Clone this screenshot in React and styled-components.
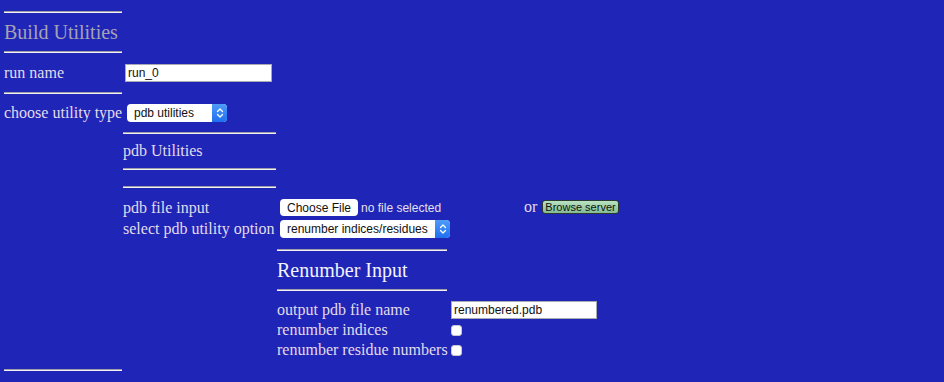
import React from "react";
import styled, { createGlobalStyle } from "styled-components";

const Global = createGlobalStyle`
  html, body { margin: 0; padding: 0; background: #1f25b6; }
  body { width: 944px; height: 382px; overflow: hidden; }
`;

const Page = styled.div`
  padding: 11px 0 0 4px;
  font-family: "Liberation Serif", "Times New Roman", serif;
  font-size: 16px;
  color: #e2dcec;
  display: flex;
  flex-direction: column;
`;

const Rule = styled.div`
  width: ${(p) => p.$w}px;
  height: 0;
  border-top: 1px solid #9c9cab;
  border-bottom: 1px solid #f2f2f2;
  margin-top: ${(p) => p.$mt || 0}px;
  margin-left: ${(p) => p.$ml || 0}px;
`;

const Heading = styled.div`
  height: ${(p) => p.$h}px;
  display: flex;
  align-items: center;
  font-size: ${(p) => p.$size || 20}px;
  color: ${(p) => p.$color};
  white-space: nowrap;
`;

const Row = styled.div`
  display: flex;
  align-items: center;
  height: ${(p) => p.$h}px;
  margin-top: ${(p) => p.$mt || 0}px;
`;

const Label = styled.div`
  width: ${(p) => p.$w}px;
  flex: none;
  white-space: nowrap;
`;

const Section = styled.div`
  display: flex;
  flex-direction: column;
  margin-left: ${(p) => p.$ml}px;
`;

const TextInput = styled.div`
  box-sizing: border-box;
  width: ${(p) => p.$w}px;
  height: 18px;
  background: #fff;
  border: 1px solid #a9a9b4;
  font-family: "Liberation Sans", Arial, sans-serif;
  font-size: 12px;
  color: #111;
  display: flex;
  align-items: center;
  padding-left: 2px;
  margin-left: ${(p) => p.$ml || 0}px;
`;

const Select = styled.div`
  box-sizing: border-box;
  width: ${(p) => p.$w}px;
  height: 18px;
  background: #fff;
  border-radius: 4px;
  display: flex;
  align-items: center;
  overflow: hidden;
  margin-left: ${(p) => p.$ml || 0}px;
  font-family: "Liberation Sans", Arial, sans-serif;
  font-size: 12px;
  color: #111;
`;

const SelectText = styled.span`
  flex: 1;
  padding-left: 7px;
  white-space: nowrap;
`;

const Arrow = styled.span`
  width: 15px;
  height: 18px;
  background: linear-gradient(#4f9cf9, #1f6ff0);
  display: flex;
  align-items: center;
  justify-content: center;
`;

const FileButton = styled.div`
  box-sizing: border-box;
  height: 17px;
  padding: 0 7px;
  background: #fff;
  border-radius: 4px;
  font-family: "Liberation Sans", Arial, sans-serif;
  font-size: 12px;
  color: #111;
  display: flex;
  align-items: center;
  margin-left: 2px;
`;

const Hint = styled.span`
  font-family: "Liberation Sans", Arial, sans-serif;
  font-size: 12px;
  color: #e4e0ee;
  margin-left: 3px;
  width: 163px;
  flex: none;
`;

const Or = styled.span`
  font-family: "Liberation Serif", "Times New Roman", serif;
  font-size: 16px;
  margin-right: 5px;
  margin-top: -2px;
`;

const Browse = styled.div`
  box-sizing: border-box;
  height: 14px;
  padding: 0 2px;
  border: 1px solid #2a3a30;
  border-radius: 3px;
  background: linear-gradient(#b9e2c2, #86bb93);
  font-family: "Liberation Sans", Arial, sans-serif;
  font-size: 11px;
  color: #0c140e;
  display: flex;
  align-items: center;
  margin-top: -2px;
`;

const Check = styled.div`
  width: 11px;
  height: 11px;
  background: #fff;
  border-radius: 3px;
  border: 1px solid #c8c8d0;
  box-sizing: border-box;
  margin-left: 4px;
`;

const Chevrons = () => (
  <svg width="8" height="12" viewBox="0 0 8 12">
    <path d="M1.5 4.5 L4 2 L6.5 4.5 M1.5 7.5 L4 10 L6.5 7.5" fill="none" stroke="#fff" strokeWidth="1.3" strokeLinecap="round" strokeLinejoin="round" />
  </svg>
);

export default function App() {
  return (
    <>
      <Global />
      <Page>
        <Rule $w={118} />
        <Heading $h={38} $color="#a6a2b4">Build Utilities</Heading>
        <Rule $w={118} />
        <Row $h={39}>
          <Label $w={121}>run name</Label>
          <TextInput $w={147}>run_0</TextInput>
        </Row>
        <Rule $w={118} />
        <Row $h={38}>
          <Label $w={123}>choose utility type</Label>
          <Select $w={100}>
            <SelectText>pdb utilities</SelectText>
            <Arrow><Chevrons /></Arrow>
          </Select>
        </Row>
        <Section $ml={119}>
          <Rule $w={153} />
          <Heading $h={34} $size={16} $color="#e2dcec">pdb Utilities</Heading>
          <Rule $w={153} />
          <Rule $w={153} $mt={16} />
          <Row $h={21} $mt={9}>
            <Label $w={155}>pdb file input</Label>
            <FileButton>Choose File</FileButton>
            <Hint>no file selected</Hint>
            <Or>or</Or>
            <Browse>Browse server</Browse>
          </Row>
          <Row $h={21}>
            <Label $w={155}>select pdb utility option</Label>
            <Select $w={170} $ml={2}>
              <SelectText>renumber indices/residues</SelectText>
              <Arrow><Chevrons /></Arrow>
            </Select>
          </Row>
          <Section $ml={154}>
            <Rule $w={170} $mt={10} />
            <Heading $h={38} $color="#f2f4ff">Renumber Input</Heading>
            <Rule $w={170} />
            <Row $h={20} $mt={9}>
              <Label $w={174}>output pdb file name</Label>
              <TextInput $w={146}>renumbered.pdb</TextInput>
            </Row>
            <Row $h={20}>
              <Label $w={170}>renumber indices</Label>
              <Check />
            </Row>
            <Row $h={20}>
              <Label $w={170}>renumber residue numbers</Label>
              <Check />
            </Row>
          </Section>
        </Section>
        <Rule $w={118} $mt={9} />
      </Page>
    </>
  );
}
